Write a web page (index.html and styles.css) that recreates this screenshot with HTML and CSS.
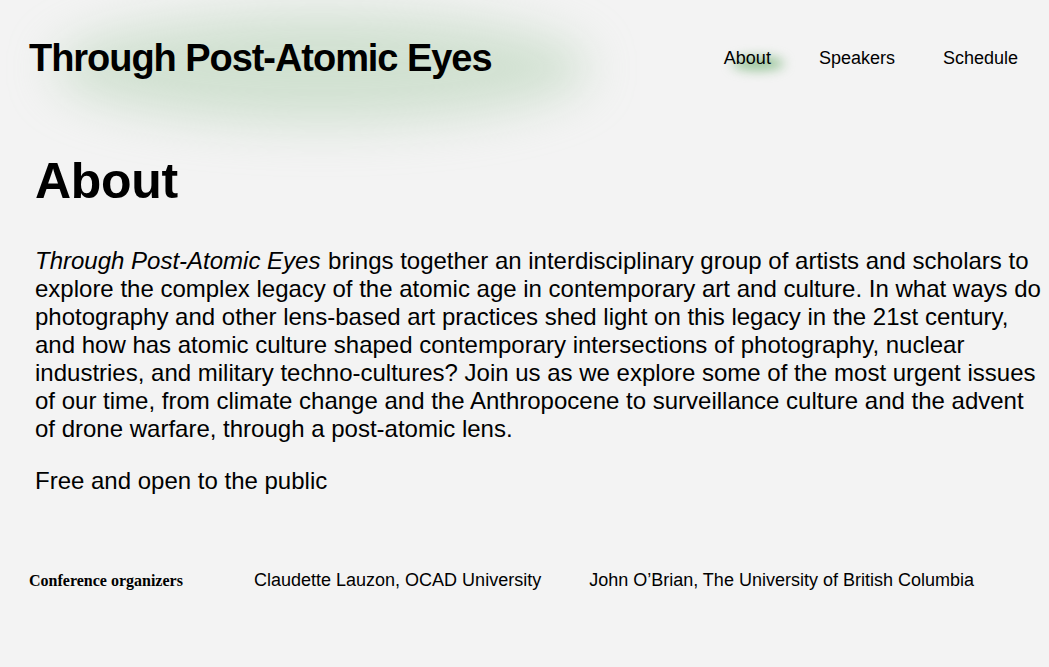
FILE: index.html
```html
<!DOCTYPE html>
<html lang="en">
<head>
<meta charset="utf-8">
<title>Through Post-Atomic Eyes</title>
<link rel="stylesheet" href="styles.css">
</head>
<body>
<header class="site-header">
  <div class="brand">
    <span class="brand-glow"></span>
    <h1 class="brand-title">Through Post-Atomic Eyes</h1>
  </div>
  <nav class="nav">
    <a class="nav-link is-active" href="#about"><span class="nav-glow"></span><span class="nav-text">About</span></a>
    <a class="nav-link" href="#speakers"><span class="nav-text">Speakers</span></a>
    <a class="nav-link" href="#schedule"><span class="nav-text">Schedule</span></a>
  </nav>
</header>
<main class="about" id="about">
  <h2 class="about-title">About</h2>
  <p class="about-text"><em class="about-em">Through Post-Atomic Eyes</em> brings together an interdisciplinary group of artists and scholars to explore the complex legacy of the atomic age in contemporary art and culture. In what ways do photography and other lens-based art practices shed light on this legacy in the 21st century, and how has atomic culture shaped contemporary intersections of photography, nuclear industries, and military techno-cultures? Join us as we explore some of the most urgent issues of our time, from climate change and the Anthropocene to surveillance culture and the advent of drone warfare, through a post-atomic lens.</p>
  <p class="about-text">Free and open to the public</p>
</main>
<footer class="organizers">
  <h3 class="organizers-label">Conference organizers</h3>
  <span class="organizer organizer-first">Claudette Lauzon, OCAD University</span>
  <span class="organizer">John O’Brian, The University of British Columbia</span>
</footer>
</body>
</html>
```

FILE: styles.css
```css
html, body {
  margin: 0;
  padding: 0;
  background: #f3f3f3;
  color: #000;
  font-family: "Liberation Sans", Arial, sans-serif;
}

.site-header {
  display: flex;
  justify-content: space-between;
  align-items: flex-start;
  padding: 38px 31px 0 29px;
  height: 112px;
  box-sizing: border-box;
}

.brand {
  position: relative;
}

.brand-glow {
  position: absolute;
  left: 25px;
  top: -25px;
  width: 535px;
  height: 110px;
  border-radius: 50%;
  background: rgba(175, 208, 175, 0.5);
  filter: blur(24px);
}

.brand-title {
  position: relative;
  margin: 0;
  font-size: 38px;
  font-weight: 700;
  line-height: 40px;
  letter-spacing: -1.05px;
}

.nav {
  display: flex;
  gap: 48px;
  padding-top: 9px;
}

.nav-link {
  position: relative;
  color: #000;
  text-decoration: none;
  font-size: 18px;
  line-height: 22px;
}

.nav-text {
  position: relative;
}

.nav-glow {
  position: absolute;
  left: 8px;
  top: 10px;
  width: 52px;
  height: 13px;
  border-radius: 50%;
  background: rgba(115, 178, 115, 0.75);
  filter: blur(6px);
}

.about {
  padding: 39px 8px 0 35px;
}

.about-title {
  margin: 0 0 36px;
  font-size: 50px;
  line-height: 60px;
  font-weight: 700;
  letter-spacing: -0.3px;
}

.about-text {
  margin: 0 0 24px;
  font-size: 24px;
  line-height: 28px;
}

.about-em {
  font-style: italic;
  padding-right: 1px;
}

.organizers {
  display: flex;
  align-items: baseline;
  padding: 51px 0 0 29px;
}

.organizers-label {
  margin: 0;
  width: 225px;
  font-family: "Liberation Serif", "Times New Roman", serif;
  font-size: 16px;
  font-weight: 700;
}

.organizer {
  font-size: 18px;
  margin-right: 48px;
}
```
